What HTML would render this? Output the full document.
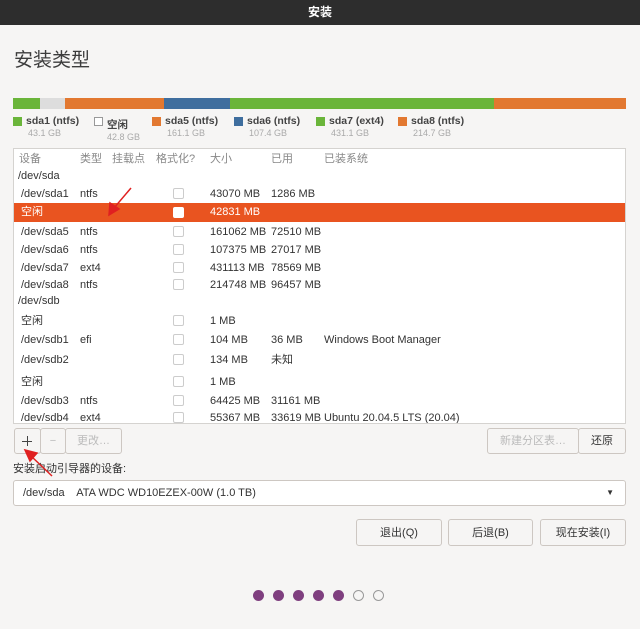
<!DOCTYPE html><html><head><meta charset="utf-8"><style>
*{margin:0;padding:0;box-sizing:border-box}
body{width:640px;height:629px;background:#f6f5f4;font-family:"Liberation Sans","Noto Sans CJK SC",sans-serif;font-size:11px;color:#333;position:relative;overflow:hidden}
.a{position:absolute;white-space:nowrap}
.tb{left:0;top:0;width:640px;height:25px;background:#2d2d2d;color:#fff;text-align:center;line-height:25px;font-size:12px;font-weight:bold}
.seg{position:absolute;top:98px;height:11px}
.lg{font-size:10.5px;font-weight:bold;color:#444}
.sz{font-size:9px;color:#aaa}
.sq{position:absolute;width:9px;height:9px}
.box{left:13px;top:148px;width:613px;height:276px;background:#fff;border:1px solid #d5d3d0;overflow:hidden}
.r{position:absolute;left:0;width:611px;height:19px;line-height:21px}
.r span{position:absolute}
.cb{position:absolute;left:159px;top:4px;width:11px;height:11px;border:1px solid #ccc;border-radius:2px;background:#fff}
.btn{position:absolute;border:1px solid #cdc7c2;background:#f6f5f4;border-radius:3px;text-align:center;line-height:24px;font-size:11px}
.dot{position:absolute;top:590px;width:11px;height:11px;border-radius:50%;background:#7f3f7f}
.dot.o{background:none;border:1px solid #999}
</style></head><body>
<div class="a tb">安装</div>
<div class="a" style="left:14px;top:45px;font-size:19px;color:#3c3c3c">安装类型</div>
<div class="seg" style="left:13px;width:27px;background:#6ab53a"></div>
<div class="seg" style="left:40px;width:25px;background:#ddd"></div>
<div class="seg" style="left:65px;width:99px;background:#e27830"></div>
<div class="seg" style="left:164px;width:66px;background:#3f6e9e"></div>
<div class="seg" style="left:230px;width:264px;background:#6ab53a"></div>
<div class="seg" style="left:494px;width:132px;background:#e27830"></div>
<div class="sq" style="left:13px;top:117px;background:#6ab53a"></div><div class="a lg" style="left:26px;top:115px">sda1 (ntfs)</div><div class="a sz" style="left:28px;top:128px">43.1 GB</div>
<div class="sq" style="left:94px;top:117px;border:1px solid #999;background:#fff"></div><div class="a lg" style="left:107px;top:117px">空闲</div><div class="a sz" style="left:107px;top:132px">42.8 GB</div>
<div class="sq" style="left:152px;top:117px;background:#e27830"></div><div class="a lg" style="left:165px;top:115px">sda5 (ntfs)</div><div class="a sz" style="left:167px;top:128px">161.1 GB</div>
<div class="sq" style="left:234px;top:117px;background:#3f6e9e"></div><div class="a lg" style="left:247px;top:115px">sda6 (ntfs)</div><div class="a sz" style="left:249px;top:128px">107.4 GB</div>
<div class="sq" style="left:316px;top:117px;background:#6ab53a"></div><div class="a lg" style="left:329px;top:115px">sda7 (ext4)</div><div class="a sz" style="left:331px;top:128px">431.1 GB</div>
<div class="sq" style="left:398px;top:117px;background:#e27830"></div><div class="a lg" style="left:411px;top:115px">sda8 (ntfs)</div><div class="a sz" style="left:413px;top:128px">214.7 GB</div>
<div class="a box">
<div class="r" style="top:0;color:#888"><span style="left:5px">设备</span><span style="left:66px">类型</span><span style="left:98px">挂载点</span><span style="left:142px">格式化?</span><span style="left:196px">大小</span><span style="left:257px">已用</span><span style="left:310px">已装系统</span></div>
<div class="r" style="top:17px"><span style="left:4px">/dev/sda</span></div>
<div class="r" style="top:35px"><span style="left:7px">/dev/sda1</span><span style="left:66px">ntfs</span><i class="cb"></i><span style="left:196px">43070 MB</span><span style="left:257px">1286 MB</span></div>
<div class="r" style="top:54px;background:#e95420;color:#fff;line-height:19px"><span style="left:7px">空闲</span><i class="cb" style="border-color:#fff"></i><span style="left:196px">42831 MB</span></div>
<div class="r" style="top:73px"><span style="left:7px">/dev/sda5</span><span style="left:66px">ntfs</span><i class="cb"></i><span style="left:196px">161062 MB</span><span style="left:257px">72510 MB</span></div>
<div class="r" style="top:91px"><span style="left:7px">/dev/sda6</span><span style="left:66px">ntfs</span><i class="cb"></i><span style="left:196px">107375 MB</span><span style="left:257px">27017 MB</span></div>
<div class="r" style="top:109px"><span style="left:7px">/dev/sda7</span><span style="left:66px">ext4</span><i class="cb"></i><span style="left:196px">431113 MB</span><span style="left:257px">78569 MB</span></div>
<div class="r" style="top:126px"><span style="left:7px">/dev/sda8</span><span style="left:66px">ntfs</span><i class="cb"></i><span style="left:196px">214748 MB</span><span style="left:257px">96457 MB</span></div>
<div class="r" style="top:142px"><span style="left:4px">/dev/sdb</span></div>
<div class="r" style="top:162px"><span style="left:7px">空闲</span><i class="cb"></i><span style="left:196px">1 MB</span></div>
<div class="r" style="top:181px"><span style="left:7px">/dev/sdb1</span><span style="left:66px">efi</span><i class="cb"></i><span style="left:196px">104 MB</span><span style="left:257px">36 MB</span><span style="left:310px">Windows Boot Manager</span></div>
<div class="r" style="top:201px"><span style="left:7px">/dev/sdb2</span><i class="cb"></i><span style="left:196px">134 MB</span><span style="left:257px">未知</span></div>
<div class="r" style="top:223px"><span style="left:7px">空闲</span><i class="cb"></i><span style="left:196px">1 MB</span></div>
<div class="r" style="top:242px"><span style="left:7px">/dev/sdb3</span><span style="left:66px">ntfs</span><i class="cb"></i><span style="left:196px">64425 MB</span><span style="left:257px">31161 MB</span></div>
<div class="r" style="top:259px"><span style="left:7px">/dev/sdb4</span><span style="left:66px">ext4</span><i class="cb"></i><span style="left:196px">55367 MB</span><span style="left:257px">33619 MB</span><span style="left:310px">Ubuntu 20.04.5 LTS (20.04)</span></div>
</div>
<div class="btn" style="left:14px;top:428px;width:27px;height:26px"><span style="position:absolute;left:7px;top:12px;width:10px;height:1px;background:#444"></span><span style="position:absolute;left:12px;top:7px;width:1px;height:10px;background:#444"></span></div>
<div class="btn" style="left:40px;top:428px;width:26px;height:26px;color:#bbb">−</div>
<div class="btn" style="left:65px;top:428px;width:57px;height:26px;color:#bbb">更改…</div>
<div class="btn" style="left:487px;top:428px;width:92px;height:26px;color:#bbb">新建分区表…</div>
<div class="btn" style="left:578px;top:428px;width:48px;height:26px">还原</div>
<div class="a" style="left:13px;top:460px">安装启动引导器的设备:</div>
<div class="btn" style="left:13px;top:480px;width:613px;height:26px;text-align:left;padding-left:9px;background:#fff">/dev/sda &nbsp;&nbsp; ATA WDC WD10EZEX-00W (1.0 TB)<span style="position:absolute;right:11px;font-size:8px">▼</span></div>
<div class="btn" style="left:356px;top:519px;width:86px;height:27px;line-height:26px">退出(Q)</div>
<div class="btn" style="left:448px;top:519px;width:85px;height:27px;line-height:26px">后退(B)</div>
<div class="btn" style="left:540px;top:519px;width:86px;height:27px;line-height:26px">现在安装(I)</div>
<div class="dot" style="left:253px"></div><div class="dot" style="left:273px"></div><div class="dot" style="left:293px"></div><div class="dot" style="left:313px"></div><div class="dot" style="left:333px"></div><div class="dot o" style="left:353px"></div><div class="dot o" style="left:373px"></div>
<svg class="a" style="left:0;top:0" width="640" height="629"><g stroke="#e02020" stroke-width="1.5" fill="#e02020">
<line x1="131" y1="188" x2="114" y2="208"/><polygon points="109,215 110,203 119,209"/>
<line x1="52" y1="476" x2="31" y2="456"/><polygon points="25,450 37,453 30,461"/></g></svg>
</body></html>
